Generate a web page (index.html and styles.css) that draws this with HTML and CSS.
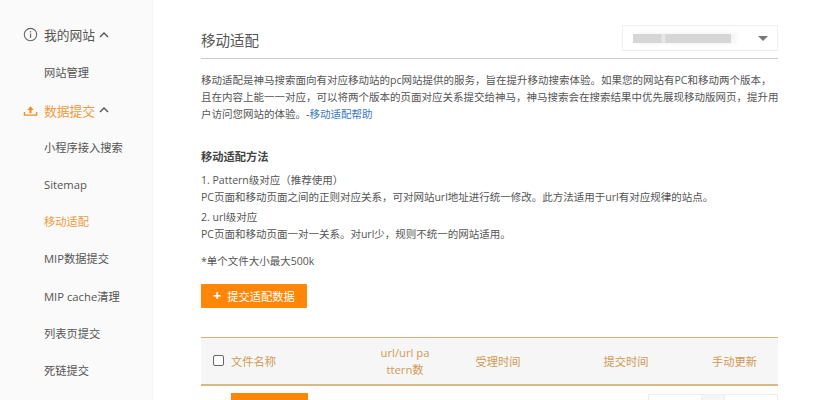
FILE: index.html
```html
<!DOCTYPE html>
<html lang="zh-CN">
<head>
<meta charset="utf-8">
<title>移动适配</title>
<link rel="stylesheet" href="styles.css">
</head>
<body>
<div class="page">
  <aside class="sidebar">
    <div class="nav-head first">
      <svg class="nav-icon" viewBox="0 0 16 16" width="15" height="15"><circle cx="8" cy="8" r="6.6" fill="none" stroke="#666" stroke-width="1.2"/><rect x="7.4" y="7" width="1.3" height="4.6" fill="#666"/><rect x="7.4" y="4.4" width="1.3" height="1.4" fill="#666"/></svg>
      <span>我的网站</span>
      <svg class="chev" viewBox="0 0 10 6" width="10" height="6"><path d="M1 5 L5 1 L9 5" fill="none" stroke="#555" stroke-width="1.4"/></svg>
    </div>
    <a class="nav-item">网站管理</a>
    <div class="nav-head active">
      <svg class="nav-icon" viewBox="0 0 16 16" width="15" height="15"><path d="M1.5 9.5 V13 H14.5 V9.5" fill="none" stroke="#f08c1e" stroke-width="1.4"/><path d="M8 3.5 L11.4 7.4 H9.1 V10.8 H6.9 V7.4 H4.6 Z" fill="#f08c1e"/></svg>
      <span>数据提交</span>
      <svg class="chev" viewBox="0 0 10 6" width="10" height="6"><path d="M1 5 L5 1 L9 5" fill="none" stroke="#555" stroke-width="1.4"/></svg>
    </div>
    <a class="nav-item">小程序接入搜索</a>
    <a class="nav-item">Sitemap</a>
    <a class="nav-item active">移动适配</a>
    <a class="nav-item">MIP数据提交</a>
    <a class="nav-item">MIP cache清理</a>
    <a class="nav-item">列表页提交</a>
    <a class="nav-item">死链提交</a>
  </aside>
  <main class="main">
    <header class="title-bar">
      <h1>移动适配</h1>
      <div class="select">
        <span class="select-blur"></span>
        <svg viewBox="0 0 10 5" width="10" height="5"><path d="M0 0 H10 L5 5 Z" fill="#777"/></svg>
      </div>
    </header>
    <p class="intro">移动适配是神马搜索面向有对应移动站的pc网站提供的服务，旨在提升移动搜索体验。如果您的网站有PC和移动两个版本，且在内容上能一一对应，可以将两个版本的页面对应关系提交给神马，神马搜索会在搜索结果中优先展现移动版网页，提升用户访问您网站的体验。-<a class="link">移动适配帮助</a></p>
    <h2>移动适配方法</h2>
    <p class="method">1. Pattern级对应（推荐使用）<br>PC页面和移动页面之间的正则对应关系，可对网站url地址进行统一修改。此方法适用于url有对应规律的站点。</p>
    <p class="method">2. url级对应<br>PC页面和移动页面一对一关系。对url少，规则不统一的网站适用。</p>
    <p class="note">*单个文件大小最大500k</p>
    <button class="submit"><span class="plus">+</span>提交适配数据</button>
    <div class="thead">
      <div class="col col-name"><span class="check"></span>文件名称</div>
      <div class="col col-url">url/url pattern数</div>
      <div class="col col-accept">受理时间</div>
      <div class="col col-submit">提交时间</div>
      <div class="col col-update">手动更新</div>
    </div>
    <div class="row">
      <span class="row-btn"></span>
      <span class="pager"><i></i><i class="mid"></i><i></i></span>
    </div>
  </main>
</div>
</body>
</html>
```
FILE: styles.css
```css
* { box-sizing: border-box; }
html, body { margin: 0; padding: 0; height: 400px; overflow: hidden; background: #fff; }
body { font-family: "Open Sans", "Noto Sans CJK SC", sans-serif; font-size: 11.25px; color: #555; }
.page { display: flex; width: 822px; height: 400px; overflow: hidden; }

.sidebar { width: 153px; flex: none; background: #fafafa; padding: 16px 0 0 23px; border-right: 1px solid #f5f5f5; }
.nav-head { display: flex; align-items: center; height: 37.2px; font-size: 12.75px; color: #555; }
.nav-head.first { margin-bottom: 1.2px; }
.nav-head span { margin-left: 6px; }
.nav-head.active span { color: #ef9a3c; }
.nav-icon { flex: none; }
.chev { margin-left: 4px; }
.nav-item { display: block; height: 37.2px; line-height: 37.2px; padding-left: 21px; color: #555; white-space: nowrap; }
.nav-item.active { color: #ef9a3c; }

.main { width: 625px; flex: none; padding: 0 0 0 48px; }
.title-bar { display: flex; justify-content: space-between; align-items: center; width: 577px; height: 59px; padding-top: 21px; border-bottom: 1px solid #ccc; }
h1 { margin: 0; font-size: 14.5px; font-weight: 400; color: #555; }
.select { display: flex; align-items: center; justify-content: space-between; width: 156px; height: 26px; padding: 0 9px 0 10px; margin-top: -3px; border: 1px solid #eee; }
.select-blur { width: 98px; height: 9px; background: linear-gradient(90deg, #d6d6d6 0 28%, #e6e6e6 30% 32%, #d6d6d6 34% 100%); box-shadow: 4px 0 4px 1px #f4f4f4; }

.intro { width: 579px; margin: 12.5px 0 0; font-size: 10.5px; line-height: 17px; color: #555; }
.link { color: #3b78c4; }
h2 { margin: 25px 0 0; font-size: 11.25px; line-height: 17px; font-weight: 700; color: #444; }
.method { width: 577px; margin: 7px 0 0; font-size: 10.5px; line-height: 17px; color: #555; white-space: nowrap; }
.method + .method { margin-top: 3px; }
.note { margin: 10px 0 0; font-size: 10.5px; line-height: 17px; }

.submit { display: flex; align-items: center; justify-content: center; width: 106px; height: 24px; margin: 14.5px 0 0; padding: 0; border: 0; border-radius: 1px; background: #ff8607; color: #fff; font: inherit; }
.plus { margin-right: 6px; font-weight: 700; font-size: 14px; line-height: 24px; }

.thead { display: flex; align-items: center; width: 577px; height: 49px; margin-top: 28.5px; background: #f6f6f6; border-top: 1px solid #d8b078; border-bottom: 2px solid #dcb882; color: #cf9a55; }
.col { text-align: center; }
.col-name { display: flex; align-items: center; width: 160px; padding-left: 12px; text-align: left; }
.check { width: 11px; height: 11px; margin-right: 7px; border: 1px solid #666; border-radius: 2px; background: #fff; }
.col-url { width: 88px; padding: 0 19px; word-break: break-all; line-height: 17px; }
.col-accept { width: 98px; }
.col-submit { width: 158px; }
.col-update { width: 73px; padding-right: 14px; }

.row { display: flex; justify-content: space-between; align-items: flex-start; width: 577px; padding: 7px 0 0 30px; }
.row-btn { display: block; width: 77px; height: 30px; background: #ff8607; }
.pager { display: flex; height: 30px; margin-top: 1px; }
.pager i { display: block; width: 54px; height: 30px; border: 1px solid #eee; }
.pager i.mid { width: 22px; background: #f6f6f6; border-left: 0; border-right: 0; }
```
